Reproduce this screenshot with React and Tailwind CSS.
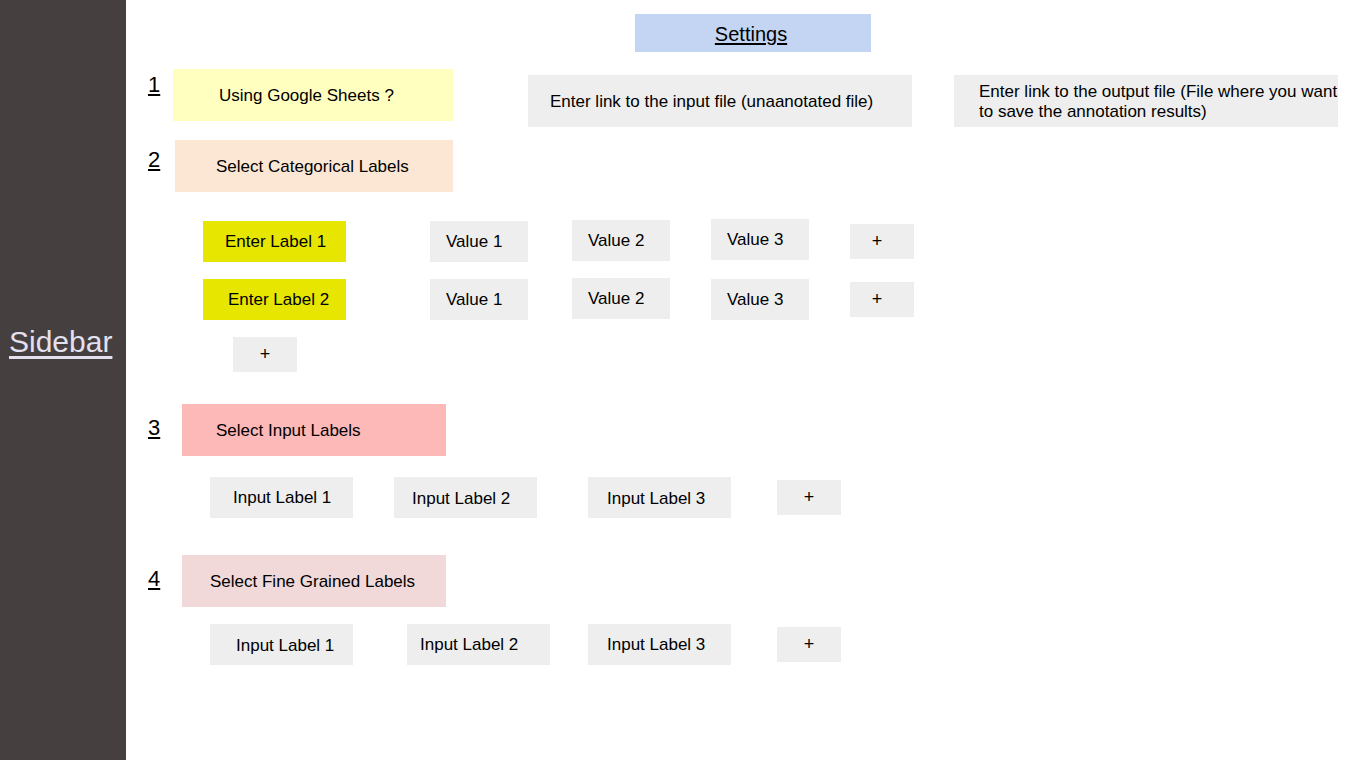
import React from 'react';

const font = { fontFamily: '"Liberation Sans", Arial, sans-serif' };

const Chip = ({ label, className = '' }) => (
  <div className={`flex items-center bg-[#eeeeee] text-[17px] text-black ${className}`}>{label}</div>
);

const PlusChip = ({ className = '' }) => (
  <div className={`flex h-[35px] w-[64px] items-center justify-center bg-[#eeeeee] text-[18px] text-black ${className}`}>+</div>
);

const StepNo = ({ n, className = '' }) => (
  <span className={`text-[22px] leading-[22px] text-black underline underline-offset-2 ${className}`}>{n}</span>
);

const categoryRows = [
  {
    label: 'Enter Label 1',
    labelMt: 'mt-[2px]',
    labelPl: 'pl-[22px]',
    values: ['mt-[2px]', 'mt-[1px]', 'mt-0'],
    plusMt: 'mt-[5px]',
    rowMt: 'mt-[27px]',
  },
  {
    label: 'Enter Label 2',
    labelMt: 'mt-[1px]',
    labelPl: 'pl-[25px]',
    values: ['mt-[1px]', 'mt-0', 'mt-[1px]'],
    plusMt: 'mt-[4px]',
    rowMt: 'mt-[16px]',
  },
];

const valueMargins = ['ml-[84px]', 'ml-[44px]', 'ml-[41px]'];

export default function App() {
  return (
    <div className="flex h-[760px] w-full bg-white" style={font}>
      {/* sidebar */}
      <aside className="w-[126px] shrink-0 bg-[#463f3f] pl-[9px] pt-[325px]">
        <span className="text-[30px] leading-[34px] text-[#e3e0ef] underline underline-offset-4">Sidebar</span>
      </aside>

      <main className="flex flex-1 flex-col">
        <div className="ml-[509px] mt-[14px] flex h-[38px] w-[236px] items-center justify-center bg-[#c3d5f2] pr-[4px] pt-[2px] text-[20px] text-black underline underline-offset-2">
          Settings
        </div>

        {/* 1 */}
        <div className="mt-[17px] flex items-start">
          <div className="ml-[22px] w-[25px] pt-[5px]"><StepNo n="1" /></div>
          <div className="flex h-[52px] w-[280px] items-center bg-[#ffffc0] pl-[46px] pt-[2px] text-[17px] text-black">
            Using Google Sheets ?
          </div>
          <div className="ml-[75px] mt-[6px] flex h-[52px] w-[384px] items-center bg-[#eeeeee] pl-[22px] pt-[2px] text-[17px] text-black">
            Enter link to the input file (unaanotated file)
          </div>
          <div className="ml-[42px] mt-[6px] flex h-[52px] w-[384px] items-center whitespace-nowrap bg-[#eeeeee] pl-[25px] pt-[2px] text-[17px] leading-[20px] text-black">
            <span>
              Enter link to the output file (File where you want
              <br />
              to save the annotation results)
            </span>
          </div>
        </div>

        {/* 2 */}
        <div className="mt-[13px] flex items-start">
          <div className="ml-[22px] w-[27px] pt-[9px]"><StepNo n="2" /></div>
          <div className="flex h-[52px] w-[278px] items-center bg-[#fce7d5] pl-[41px] pt-[2px] text-[17px] text-black">
            Select Categorical Labels
          </div>
        </div>

        {categoryRows.map((row) => (
          <div key={row.label} className={`flex items-start ${row.rowMt}`}>
            <div className={`ml-[77px] flex h-[41px] w-[143px] items-center bg-[#e6e600] text-[17px] text-black ${row.labelMt} ${row.labelPl}`}>
              {row.label}
            </div>
            {row.values.map((mt, i) => (
              <div
                key={i}
                className={`flex h-[41px] w-[98px] items-center bg-[#eeeeee] pl-[16px] text-[17px] text-black ${valueMargins[i]} ${mt}`}
              >
                Value {i + 1}
              </div>
            ))}
            <PlusChip className={`ml-[41px] pr-[10px] ${row.plusMt}`} />
          </div>
        ))}

        <PlusChip className="ml-[107px] mt-[17px]" />

        {/* 3 */}
        <div className="mt-[32px] flex items-start">
          <div className="ml-[22px] w-[34px] pt-[13px]"><StepNo n="3" /></div>
          <div className="flex h-[52px] w-[264px] items-center bg-[#fdb8b8] pl-[34px] pt-[2px] text-[17px] text-black">
            Select Input Labels
          </div>
        </div>

        <div className="mt-[21px] flex items-start">
          <Chip label="Input Label 1" className="ml-[84px] h-[41px] w-[143px] pl-[23px]" />
          <Chip label="Input Label 2" className="ml-[41px] h-[41px] w-[143px] pl-[18px] pt-[2px]" />
          <Chip label="Input Label 3" className="ml-[51px] h-[41px] w-[143px] pl-[19px] pt-[2px]" />
          <PlusChip className="ml-[46px] mt-[3px]" />
        </div>

        {/* 4 */}
        <div className="mt-[37px] flex items-start">
          <div className="ml-[22px] w-[34px] pt-[13px]"><StepNo n="4" /></div>
          <div className="flex h-[52px] w-[264px] items-center bg-[#f1d9d9] pl-[28px] pt-[2px] text-[17px] text-black">
            Select Fine Grained Labels
          </div>
        </div>

        <div className="mt-[17px] flex items-start">
          <Chip label="Input Label 1" className="ml-[84px] h-[41px] w-[143px] pl-[26px] pt-[3px]" />
          <Chip label="Input Label 2" className="ml-[54px] h-[41px] w-[143px] pl-[13px]" />
          <Chip label="Input Label 3" className="ml-[38px] h-[41px] w-[143px] pl-[19px]" />
          <PlusChip className="ml-[46px] mt-[3px]" />
        </div>
      </main>
    </div>
  );
}
